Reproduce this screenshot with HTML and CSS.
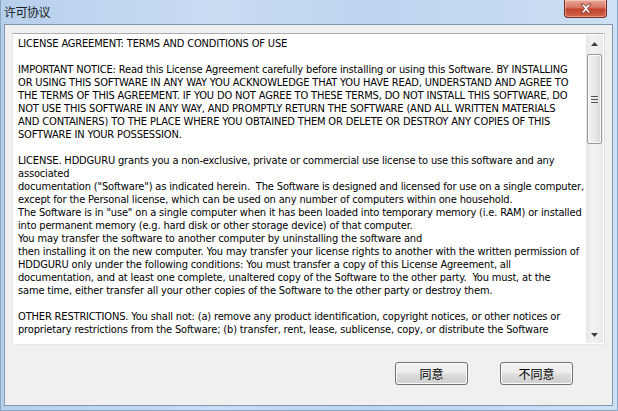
FILE: index.html
```html
<!DOCTYPE html>
<html lang="zh-CN">
<head>
  <meta charset="UTF-8" />
  <title>许可协议</title>
  <link rel="stylesheet" href="styles.css">
</head>
<body>
  <div class="window">
    <div class="titlebar">
      <span class="title">许可协议</span>
      <button class="close" aria-label="关闭">
        <svg width="14" height="11" viewBox="0 0 14 11">
          <path d="M2 1h3l2 2.5 2-2.5h3l-3.5 4.5 3.5 4.5h-3l-2-2.5-2 2.5h-3l3.5-4.5z" fill="#fff" stroke="#6b2a22" stroke-width="0.8"/>
        </svg>
      </button>
    </div>

    <div class="client">
      <div class="licence-box">
        <div class="licence-text">LICENSE AGREEMENT: TERMS AND CONDITIONS OF USE

IMPORTANT NOTICE: Read this License Agreement carefully before installing or using this Software. BY INSTALLING
OR USING THIS SOFTWARE IN ANY WAY YOU ACKNOWLEDGE THAT YOU HAVE READ, UNDERSTAND AND AGREE TO
THE TERMS OF THIS AGREEMENT. IF YOU DO NOT AGREE TO THESE TERMS, DO NOT INSTALL THIS SOFTWARE, DO
NOT USE THIS SOFTWARE IN ANY WAY, AND PROMPTLY RETURN THE SOFTWARE (AND ALL WRITTEN MATERIALS
AND CONTAINERS) TO THE PLACE WHERE YOU OBTAINED THEM OR DELETE OR DESTROY ANY COPIES OF THIS
SOFTWARE IN YOUR POSSESSION.

LICENSE. HDDGURU grants you a non-exclusive, private or commercial use license to use this software and any
associated
documentation ("Software") as indicated herein.  The Software is designed and licensed for use on a single computer,
except for the Personal license, which can be used on any number of computers within one household.
The Software is in "use" on a single computer when it has been loaded into temporary memory (i.e. RAM) or installed
into permanent memory (e.g. hard disk or other storage device) of that computer.
You may transfer the software to another computer by uninstalling the software and
then installing it on the new computer. You may transfer your license rights to another with the written permission of
HDDGURU only under the following conditions: You must transfer a copy of this License Agreement, all
documentation, and at least one complete, unaltered copy of the Software to the other party.  You must, at the
same time, either transfer all your other copies of the Software to the other party or destroy them.

OTHER RESTRICTIONS. You shall not: (a) remove any product identification, copyright notices, or other notices or
proprietary restrictions from the Software; (b) transfer, rent, lease, sublicense, copy, or distribute the Software</div>

        <div class="scrollbar">
          <div class="arrow">
            <svg width="7" height="4" viewBox="0 0 7 4"><path d="M0 4h7L3.5 0z" fill="#404040"/></svg>
          </div>
          <div class="track">
            <div class="thumb">
              <svg width="7" height="7" viewBox="0 0 7 7">
                <path d="M0 0.5h7M0 3.5h7M0 6.5h7" stroke="#555" stroke-width="1"/>
              </svg>
            </div>
          </div>
          <div class="arrow">
            <svg width="7" height="4" viewBox="0 0 7 4"><path d="M0 0h7L3.5 4z" fill="#404040"/></svg>
          </div>
        </div>
      </div>

      <div class="actions">
        <button class="btn">同意</button>
        <button class="btn">不同意</button>
      </div>
    </div>
  </div>
</body>
</html>
```

FILE: styles.css
```css
* {
  margin: 0;
  padding: 0;
  box-sizing: border-box;
}

body {
  width: 618px;
  height: 411px;
  overflow: hidden;
  font-family: "DejaVu Sans Condensed", "DejaVu Sans", sans-serif;
  font-stretch: condensed;
}

.window {
  height: 411px;
  display: flex;
  flex-direction: column;
  background: linear-gradient(to right, #b6cfeb 0%, #c9ddf3 35%, #bcd4ee 60%, #cde0f4 100%);
  border-left: 1px solid #8aa6c6;
  border-right: 1px solid #8aa6c6;
  border-bottom: 1px solid #8aa6c6;
}

.titlebar {
  height: 24px;
  display: flex;
  justify-content: space-between;
  align-items: flex-start;
  padding-right: 10px;
}

.title {
  font-family: "Noto Sans CJK SC", sans-serif;
  font-size: 12px;
  line-height: 24px;
  padding-left: 3px;
  color: #1a1a1a;
  letter-spacing: -0.5px;
}

.close {
  width: 43px;
  height: 18px;
  border: 1px solid #7c2d22;
  border-top: none;
  border-radius: 0 0 4px 4px;
  background: linear-gradient(to bottom, #e9a99b 0%, #d8735f 45%, #c2412a 55%, #d26a4d 100%);
  box-shadow: inset 0 0 0 1px rgba(255, 255, 255, 0.35);
  display: flex;
  align-items: center;
  justify-content: center;
}

.client {
  flex: 1;
  margin: 0 4px 4px 3px;
  background: #f0f0f0;
  border: 1px solid #8298b0;
  padding: 8px 7px 0 7px;
  display: flex;
  flex-direction: column;
}

.licence-box {
  height: 312px;
  display: flex;
  background: #fff;
  border: 1px solid #abadb3;
  border-left-color: #e2e3ea;
  border-right-color: #dbdfe6;
  border-bottom-color: #e3e9ef;
  overflow: hidden;
}

.licence-text {
  flex: 1;
  white-space: pre;
  overflow: hidden;
  font-size: 11px;
  letter-spacing: -0.16px;
  line-height: 13px;
  color: #000;
  padding: 3px 0 0 5px;
}

.scrollbar {
  width: 17px;
  display: flex;
  flex-direction: column;
  background: linear-gradient(to right, #e6e6e6, #f2f2f2 40%, #eaeaea);
  margin: 1px 1px 1px 0;
}

.arrow {
  height: 17px;
  display: flex;
  align-items: center;
  justify-content: center;
}

.track {
  flex: 1;
  padding: 2px 0;
}

.thumb {
  height: 90px;
  margin: 0 1px;
  border: 1px solid #979797;
  border-radius: 2px;
  background: linear-gradient(to right, #f3f3f3, #e8e8e8 50%, #d9d9d9);
  box-shadow: inset 0 0 0 1px #fbfbfb;
  display: flex;
  align-items: center;
  justify-content: center;
}

.actions {
  display: flex;
  justify-content: flex-end;
  gap: 32px;
  padding: 17px 32px 0 0;
}

.btn {
  width: 73px;
  height: 23px;
  border: 1px solid #707070;
  border-radius: 3px;
  background: linear-gradient(to bottom, #f2f2f2 0%, #ebebeb 48%, #dddddd 52%, #cfcfcf 100%);
  box-shadow: inset 0 0 0 1px #fcfcfc;
  font-family: "Noto Sans CJK SC", sans-serif;
  font-size: 12px;
  color: #000;
}
```
